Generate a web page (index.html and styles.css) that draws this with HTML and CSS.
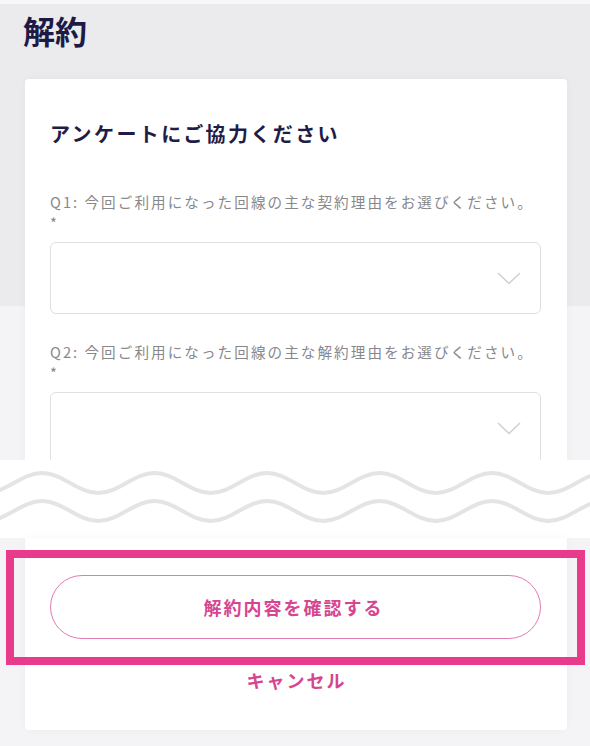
FILE: index.html
```html
<!DOCTYPE html>
<html lang="ja">
<head>
<meta charset="utf-8">
<title>解約</title>
<link rel="stylesheet" href="styles.css">
</head>
<body>
<div class="page">
  <section class="segment segment-top">
    <h1 class="page-title">解約</h1>
    <div class="card card-top">
      <h2 class="survey-title">アンケートにご協力ください</h2>
      <div class="field field-first">
        <label class="field-label">Q1: 今回ご利用になった回線の主な契約理由をお選びください。<span class="required">*</span></label>
        <div class="select">
          <svg class="chevron" width="24" height="13" viewBox="0 0 24 13"><polyline points="1,1 12,11.5 23,1" fill="none" stroke="#cfcfd4" stroke-width="1.5"/></svg>
        </div>
      </div>
      <div class="field">
        <label class="field-label">Q2: 今回ご利用になった回線の主な解約理由をお選びください。<span class="required">*</span></label>
        <div class="select">
          <svg class="chevron" width="24" height="13" viewBox="0 0 24 13"><polyline points="1,1 12,11.5 23,1" fill="none" stroke="#cfcfd4" stroke-width="1.5"/></svg>
        </div>
      </div>
    </div>
  </section>

  <div class="wave-divider">
    <svg width="590" height="78" viewBox="0 0 590 78">
      <path d="M -70.5 13 C -50 13, -34.75 33, -14.25 33 S 21.5 13, 42 13 S 77.75 33, 98.25 33 S 134 13, 154.5 13 S 190.25 33, 210.75 33 S 246.5 13, 267 13 S 302.75 33, 323.25 33 S 359 13, 379.5 13 S 415.25 33, 435.75 33 S 471.5 13, 492 13 S 527.75 33, 548.25 33 S 584 13, 604.5 13" fill="none" stroke="#e4e4e5" stroke-width="4" stroke-linecap="round"/>
      <path d="M -70.5 41 C -50 41, -34.75 61, -14.25 61 S 21.5 41, 42 41 S 77.75 61, 98.25 61 S 134 41, 154.5 41 S 190.25 61, 210.75 61 S 246.5 41, 267 41 S 302.75 61, 323.25 61 S 359 41, 379.5 41 S 415.25 61, 435.75 61 S 471.5 41, 492 41 S 527.75 61, 548.25 61 S 584 41, 604.5 41" fill="none" stroke="#e4e4e5" stroke-width="4" stroke-linecap="round"/>
    </svg>
  </div>

  <section class="segment segment-bottom">
    <div class="card card-bottom">
      <div class="highlight">
        <button class="btn-confirm" type="button">解約内容を確認する</button>
      </div>
      <a class="cancel" href="#">キャンセル</a>
    </div>
  </section>
</div>
</body>
</html>
```

FILE: styles.css
```css
* {
  box-sizing: border-box;
}

body {
  margin: 0;
  background: #f4f4f6;
  font-family: "Noto Sans CJK JP", "Noto Sans", sans-serif;
}

.page {
  width: 590px;
}

.segment-top {
  height: 460px;
  overflow: hidden;
  border-top: 4px solid #f7f7f8;
  background: linear-gradient(#ebebed 0, #ebebed 302px, #f4f4f6 302px);
}

.page-title {
  margin: 0 0 0 23px;
  padding-top: 4px;
  font-size: 32px;
  line-height: 44px;
  font-weight: 700;
  color: #1d1b45;
}

.card {
  margin: 0 23px 0 25px;
  padding: 0 26px 0 25px;
  background: #ffffff;
  box-shadow: 0 0 10px rgba(0, 0, 0, 0.035);
}

.card-top {
  margin-top: 27px;
  padding-top: 41px;
  padding-bottom: 40px;
  border-radius: 4px 4px 0 0;
}

.survey-title {
  margin: 0;
  font-size: 20px;
  line-height: 28px;
  font-weight: 700;
  letter-spacing: 2.4px;
  color: #1f1d47;
}

.field {
  margin-top: 27px;
}

.field-first {
  margin-top: 43px;
}

.field-label {
  display: block;
  font-size: 14.6px;
  line-height: 21px;
  letter-spacing: 2.05px;
  color: #88888b;
}

.required {
  display: block;
}

.select {
  margin-top: 9px;
  height: 72px;
  border: 1px solid #dfdfe2;
  border-radius: 6px;
  display: flex;
  align-items: center;
  justify-content: flex-end;
  padding-right: 19px;
}

.chevron {
  display: block;
}

.wave-divider {
  height: 78px;
  background: #ffffff;
}

.wave-divider svg {
  display: block;
}

.segment-bottom {
  padding-bottom: 16px;
}

.card-bottom {
  padding-top: 12px;
  padding-bottom: 38px;
  border-radius: 0 0 4px 4px;
  display: flex;
  flex-direction: column;
  align-items: stretch;
}

.highlight {
  margin: 0 -44px;
  padding: 17px 36px 18px;
  border: 8px solid #ea3a8c;
}

.btn-confirm {
  display: block;
  width: 100%;
  height: 64px;
  border: 1.5px solid #e07cb1;
  border-radius: 32px;
  background: #ffffff;
  font-family: "Noto Sans CJK JP", "Noto Sans", sans-serif;
  font-size: 18px;
  font-weight: 700;
  letter-spacing: 2px;
  padding-left: 2px;
  color: #d6458f;
}

.cancel {
  margin-top: 3px;
  text-align: center;
  font-size: 18px;
  line-height: 24px;
  font-weight: 700;
  letter-spacing: 2px;
  padding-left: 2px;
  color: #d6458f;
  text-decoration: none;
}
```
